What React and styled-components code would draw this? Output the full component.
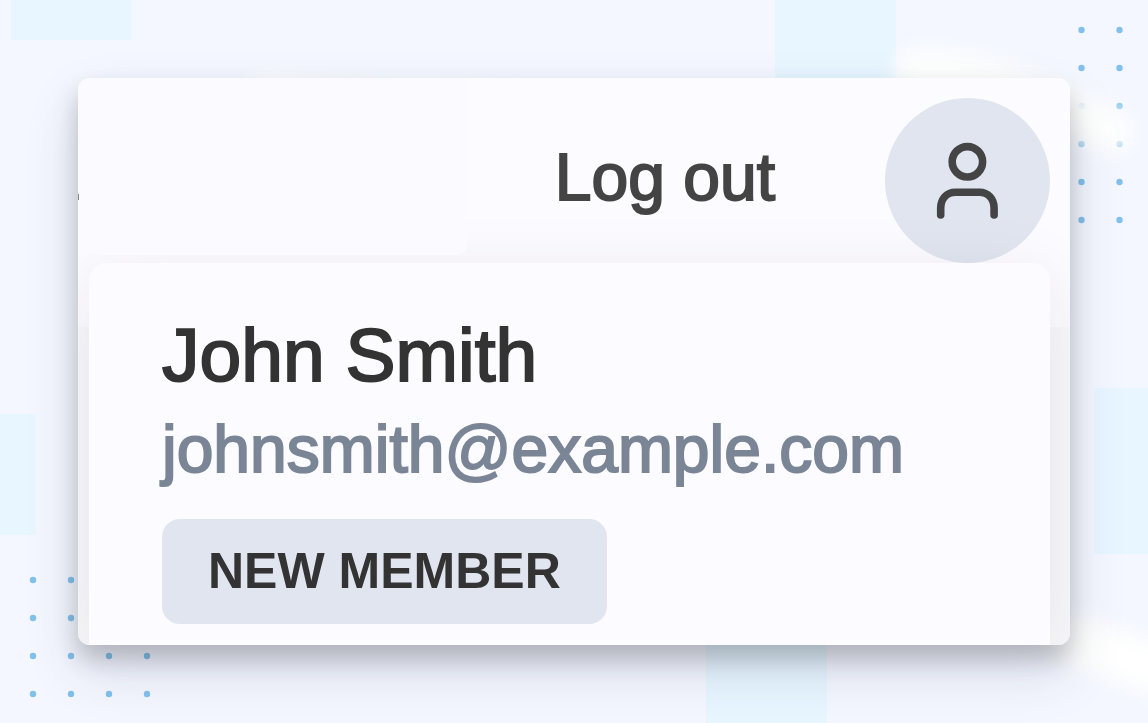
import React from "react";
import styled, { createGlobalStyle } from "styled-components";

const GlobalStyle = createGlobalStyle`
  * {
    box-sizing: border-box;
  }

  body {
    margin: 0;
    background-color: #f4f7ff;
    font-family: "Liberation Sans", Arial, sans-serif;
  }
`;

const Page = styled.div`
  position: relative;
  min-height: 100vh;
  padding: 78px;
  overflow: hidden;
`;

const Backdrop = styled.svg`
  position: absolute;
  top: 0;
  left: 0;
  width: 100%;
  height: 100%;
`;

const CardShadow = styled.div`
  position: relative;
  border-radius: 12px;
  box-shadow: 0 14px 24px rgba(0, 0, 0, 0.2), 0 26px 56px rgba(40, 50, 80, 0.14);
`;

const Card = styled.main`
  position: relative;
  border-radius: 12px;
  overflow: hidden;
  background-color: #f8f8fb;
`;

const Header = styled.header`
  display: flex;
  align-items: center;
  padding-right: 20px;
  background-color: #fcfbff;
`;

const HeaderBlank = styled.div`
  position: relative;
  z-index: 1;
  align-self: flex-start;
  width: 40%;
  height: 177px;
  margin-right: auto;
  padding-top: 116px;
  border-radius: 0 0 10px 0;
  background-color: #fbfbff;
`;

const Edge = styled.div`
  width: 1px;
  height: 6px;
  background-color: #8a8a8c;
`;

const LogoutButton = styled.button`
  margin: 0 110px 52px 0;
  padding: 0;
  border: none;
  background: none;
  font-family: inherit;
  font-size: 66px;
  line-height: 76px;
  color: #444444;
  -webkit-text-stroke: 2px #444444;
  cursor: pointer;
`;

const AvatarButton = styled.button`
  display: flex;
  justify-content: center;
  align-items: center;
  width: 165px;
  height: 165px;
  margin: 20px 0 64px;
  padding: 0;
  border: none;
  border-radius: 50%;
  background-color: #e0e5ef;
  cursor: pointer;
`;

const Menu = styled.section`
  position: relative;
  display: flex;
  flex-direction: column;
  align-items: flex-start;
  margin: -64px 20px 0 11px;
  padding: 52px 73px 21px;
  border-radius: 18px 18px 0 0;
  background-color: #fcfbff;
  box-shadow: 0 16px 72px rgba(40, 35, 60, 0.09);
`;

const Name = styled.h1`
  margin: 0;
  font-size: 75px;
  font-weight: normal;
  line-height: 80px;
  color: #333333;
  -webkit-text-stroke: 2px #333333;
`;

const Email = styled.p`
  margin: 16px 0 32px;
  font-size: 66px;
  line-height: 76px;
  color: #7a8596;
  -webkit-text-stroke: 2px #7a8596;
`;

const Badge = styled.span`
  padding: 22px 46px 23px;
  border-radius: 18px;
  background-color: #e0e5ef;
  font-size: 50px;
  font-weight: bold;
  line-height: 60px;
  color: #333333;
`;

const squares = [
  { x: 11, y: -80, width: 121, height: 120 },
  { x: 775, y: -20, width: 121, height: 121 },
  { x: -85, y: 414, width: 121, height: 121 },
  { x: 1094, y: 388, width: 121, height: 166 },
  { x: 706, y: 610, width: 121, height: 130 },
];

const dotGroups = [
  { xs: [1081.5, 1119.5], ys: [30, 68, 106, 144, 182, 220] },
  { xs: [33, 71, 109, 147], ys: [580, 618, 656, 694] },
];

const Wallpaper = () => (
  <Backdrop viewBox="0 0 1148 723" preserveAspectRatio="xMidYMid slice" aria-hidden="true">
    <defs>
      <filter id="glow" x="-50%" y="-50%" width="200%" height="200%" colorInterpolationFilters="sRGB">
        <feGaussianBlur stdDeviation="11" />
      </filter>
    </defs>
    {squares.map((s) => (
      <rect key={`${s.x}-${s.y}`} {...s} fill="#e7f6ff" />
    ))}
    {dotGroups.map((group) =>
      group.ys.map((y) =>
        group.xs.map((x) => <circle key={`${x}-${y}`} cx={x} cy={y} r="3.2" fill="#82c1ec" />)
      )
    )}
    <g fill="none" stroke="#fefffe" strokeLinecap="round" filter="url(#glow)">
      <path d="M260 92 L500 104" strokeWidth="26" />
      <path d="M916 72 C970 70 1040 92 1110 132" strokeWidth="44" />
      <path d="M1075 640 L1170 674" strokeWidth="50" />
    </g>
  </Backdrop>
);

const UserIcon = () => (
  <svg width="64" height="80" viewBox="0 0 64 80" fill="none" stroke="#444444" strokeWidth="7.6" aria-hidden="true">
    <circle cx="31.4" cy="20.8" r="15.2" />
    <path d="M4.7 74 V67 C4.7 58 10.5 51.2 19.5 51.2 H43.3 C52.3 51.2 58.1 58 58.1 67 V74" strokeLinecap="round" />
  </svg>
);

export default () => {
  return (
    <>
      <GlobalStyle />
      <Page>
        <Wallpaper />
        <CardShadow>
          <Card>
            <Header>
              <HeaderBlank>
                <Edge />
              </HeaderBlank>
              <LogoutButton type="button">Log out</LogoutButton>
              <AvatarButton type="button" aria-label="Account">
                <UserIcon />
              </AvatarButton>
            </Header>
            <Menu>
              <Name>John Smith</Name>
              <Email>johnsmith@example.com</Email>
              <Badge>NEW MEMBER</Badge>
            </Menu>
          </Card>
        </CardShadow>
      </Page>
    </>
  );
};
